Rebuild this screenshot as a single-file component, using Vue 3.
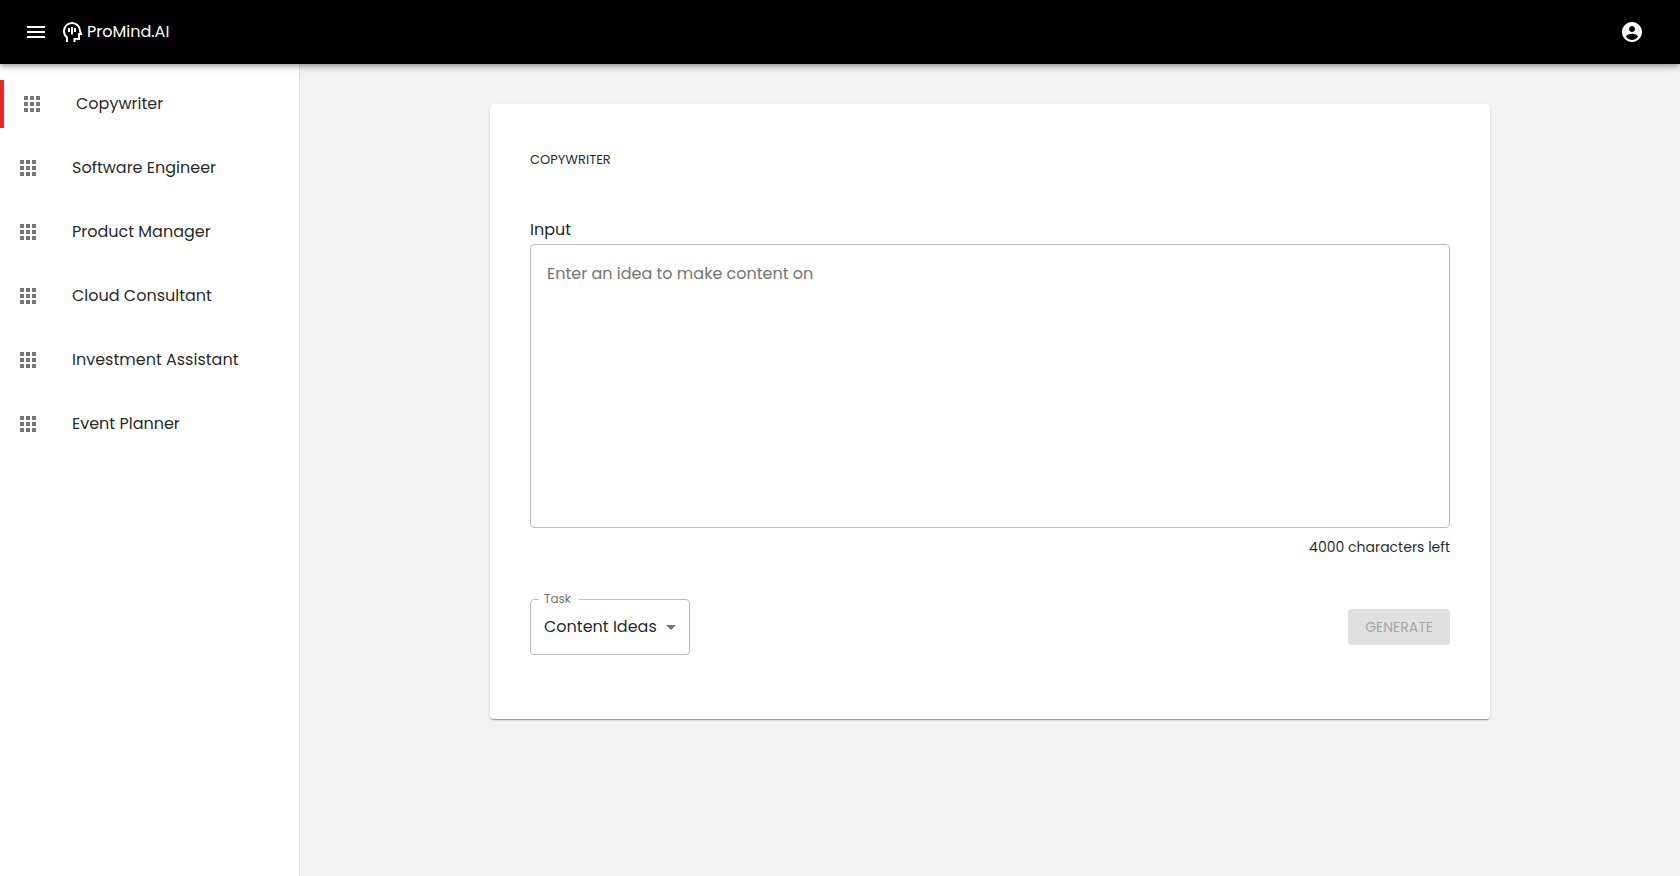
<template>
  <div class="app">
    <header class="app-bar">
      <button type="button" class="icon-button" aria-label="Toggle menu" @click="drawerOpen = !drawerOpen">
        <svg class="icon" viewBox="0 0 24 24"><path d="M3 18h18v-2H3zm0-5h18v-2H3zm0-7v2h18V6z" /></svg>
      </button>
      <a href="#" class="brand">
        <svg class="icon" viewBox="0 0 24 24">
          <path
            class="head"
            d="M7 22v-4.500C5.200 16 4 13.800 4 11.200 4 6.500 7.600 3 12 3s8 3.500 8 8l1 3h-2v5h-4.500v3"
          />
          <path d="M8 8h2v4H8zM11 7h2v7.500h-2zM14 8h2v4h-2z" />
        </svg>
        <span>ProMind.AI</span>
      </a>
      <button type="button" class="icon-button account" aria-label="Account">
        <svg class="icon" viewBox="0 0 24 24">
          <path
            d="M12 2C6.480 2 2 6.480 2 12s4.480 10 10 10 10-4.480 10-10S17.520 2 12 2m0 4c1.660 0 3 1.340 3 3s-1.340 3-3 3-3-1.340-3-3 1.340-3 3-3m0 14c-2.500 0-4.710-1.280-6-3.220.03-1.990 4-3.080 6-3.080s5.970 1.090 6 3.080C16.710 18.720 14.500 20 12 20"
          />
        </svg>
      </button>
    </header>

    <div class="body">
      <nav v-if="drawerOpen" class="drawer">
        <ul>
          <li v-for="role in roles" :key="role">
            <a href="#" :class="{ active: role === currentRole }" @click.prevent="currentRole = role">
              <svg class="icon" viewBox="0 0 24 24">
                <path
                  d="M4 8h4V4H4zm6 12h4v-4h-4zm-6 0h4v-4H4zm0-6h4v-4H4zm6 0h4v-4h-4zm6-10v4h4V4zm-6 4h4V4h-4zm6 6h4v-4h-4zm0 6h4v-4h-4z"
                />
              </svg>
              <span>{{ role }}</span>
            </a>
          </li>
        </ul>
      </nav>

      <main>
        <form class="card" @submit.prevent>
          <h1>{{ currentRole }}</h1>

          <label for="idea" class="input-label">Input</label>
          <textarea
            id="idea"
            v-model="idea"
            :maxlength="maxLength"
            placeholder="Enter an idea to make content on"
          ></textarea>
          <p class="counter">{{ charactersLeft }} characters left</p>

          <div class="actions">
            <div class="select-field">
              <label for="task">Task</label>
              <select id="task" v-model="task">
                <option v-for="item in tasks" :key="item">{{ item }}</option>
              </select>
              <svg class="icon" viewBox="0 0 24 24"><path d="m7 10 5 5 5-5z" /></svg>
            </div>
            <button type="submit" class="generate" :disabled="!idea">Generate</button>
          </div>
        </form>
      </main>
    </div>
  </div>
</template>

<script setup>
import { computed, ref } from 'vue';

const roles = [
  'Copywriter',
  'Software Engineer',
  'Product Manager',
  'Cloud Consultant',
  'Investment Assistant',
  'Event Planner',
];
const tasks = ['Content Ideas'];
const maxLength = 4000;

const drawerOpen = ref(true);
const currentRole = ref('Copywriter');
const idea = ref('');
const task = ref('Content Ideas');

const charactersLeft = computed(() => maxLength - idea.value.length);
</script>

<style>
body {
  margin: 0;
  background-color: #f2f2f2;
}
</style>

<style scoped>
.app {
  display: flex;
  flex-direction: column;
  min-height: 100vh;
  font-family: Poppins, Inter, sans-serif;
  font-size: 16px;
  line-height: 24px;
  color: rgba(0, 0, 0, 0.87);
}
.app * {
  box-sizing: border-box;
}
button,
select,
textarea {
  font: inherit;
  color: inherit;
}
.icon {
  display: block;
  flex-shrink: 0;
  width: 24px;
  height: 24px;
  fill: currentColor;
}

.app-bar {
  position: relative;
  z-index: 1;
  display: flex;
  align-items: center;
  min-height: 64px;
  padding: 0 24px 0 12px;
  background-color: #000;
  color: #fff;
  box-shadow: 0 2px 4px -1px rgba(0, 0, 0, 0.2), 0 4px 5px rgba(0, 0, 0, 0.14),
    0 1px 10px rgba(0, 0, 0, 0.12);
}
.icon-button {
  padding: 12px;
  border: 0;
  background: none;
  cursor: pointer;
}
.account {
  margin-left: auto;
}
.brand {
  display: flex;
  align-items: center;
  gap: 3px;
  color: inherit;
  text-decoration: none;
}
.head {
  fill: none;
  stroke: currentColor;
  stroke-width: 2;
}

.body {
  display: flex;
  flex: 1;
}
.drawer {
  flex: 0 0 300px;
  padding: 8px 0;
  border-right: 1px solid rgba(0, 0, 0, 0.12);
  background-color: #fff;
}
.drawer ul {
  margin: 0;
  padding: 0;
  list-style: none;
}
.drawer li {
  padding: 8px 0;
}
.drawer a {
  display: flex;
  align-items: center;
  gap: 32px;
  min-height: 48px;
  padding: 0 16px;
  color: inherit;
  text-decoration: none;
}
.drawer a.active {
  border-left: 4px solid #d92d2d;
}
.drawer .icon {
  color: #757575;
}

main {
  flex: 1;
  min-width: 0;
  padding: 40px;
}
.card {
  display: flex;
  flex-direction: column;
  max-width: 1000px;
  margin: 0 auto;
  padding: 40px 40px 64px;
  border-radius: 4px;
  background-color: #fff;
  box-shadow: 0 2px 1px -1px rgba(0, 0, 0, 0.2), 0 1px 1px rgba(0, 0, 0, 0.14),
    0 1px 3px rgba(0, 0, 0, 0.12);
}
h1 {
  margin: 0 0 42px;
  font-size: 13px;
  font-weight: 400;
  line-height: 32px;
  text-transform: uppercase;
}
.input-label {
  margin-bottom: 2px;
}
textarea {
  display: block;
  width: 100%;
  height: 284px;
  padding: 17px 16px;
  border: 1px solid #bdbdbd;
  border-radius: 4px;
  outline: 0;
  resize: none;
}
textarea::placeholder {
  color: #757575;
}
.counter {
  margin: 8px 0 40px;
  font-size: 14px;
  line-height: 23px;
  text-align: right;
}
.actions {
  display: flex;
  align-items: center;
  justify-content: space-between;
}
.select-field {
  position: relative;
}
.select-field label {
  position: absolute;
  top: -8px;
  left: 9px;
  padding: 0 8px 0 5px;
  background-color: #fff;
  color: rgba(0, 0, 0, 0.6);
  font-size: 12px;
  line-height: 16px;
}
.select-field select {
  width: 160px;
  height: 56px;
  padding: 0 32px 0 13px;
  border: 1px solid #bdbdbd;
  border-radius: 4px;
  background-color: #fff;
  appearance: none;
}
.select-field .icon {
  position: absolute;
  top: 16px;
  right: 7px;
  color: #757575;
  pointer-events: none;
}
.generate {
  height: 36px;
  padding: 0 17px;
  border: 0;
  border-radius: 4px;
  background-color: #000;
  color: #fff;
  font-size: 14px;
  text-transform: uppercase;
}
.generate:disabled {
  background-color: #e0e0e0;
  color: #a6a6a6;
}
</style>
